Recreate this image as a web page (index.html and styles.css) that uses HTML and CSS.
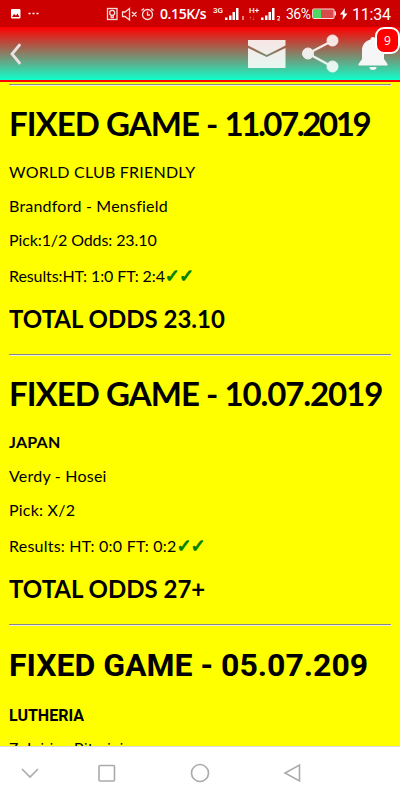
FILE: index.html
```html
<!DOCTYPE html>
<html lang="en">
<head>
  <meta charset="UTF-8" />
  <meta name="viewport" content="width=device-width, initial-scale=1" />
  <title>Fixed Games</title>
  <link rel="stylesheet" href="styles.css">
</head>
<body>
  <div class="status">
    <svg class="notif" width="30" height="12" viewBox="0 0 30 12">
      <rect x="1" y="1" width="9.500" height="9.500" rx="1" fill="#fff"/>
      <path d="M2 9l2-3 2 1.500 1.500-2L9.500 9z" fill="#c00"/>
      <path d="M18.500 5.500h2M22.500 5.500h2M26.500 5.500h2" stroke="#fff" stroke-width="1.500"/>
    </svg>
    <svg class="modes" width="50" height="14" viewBox="0 0 50 14" fill="none" stroke="#f5dcdc" stroke-width="1.300">
      <rect x="1.500" y="1.500" width="9.500" height="11"/>
      <circle cx="6.200" cy="5.800" r="2.500"/>
      <path d="M5.200 8v2.500h2V8"/>
      <path d="M16.500 5v4.500h2.500l4.500 3.500V1.500L19 5zM26 5l4.500 4.500M30.500 5L26 9.500"/>
      <circle cx="41.500" cy="7.500" r="5"/>
      <path d="M41.500 4.500v3.500H44M35.500 3.500l2.500-2M47.500 3.500l-2.500-2"/>
    </svg>
    <span class="speed">0.15K/s</span>
    <span class="net">3G</span>
    <svg class="bars" width="20" height="14" viewBox="0 0 20 14" fill="#fff">
      <path d="M0 10.500h2.500V13H0zM4 8.500h2.500V13H4zM7.500 5h2.500v8H7.500zM11 1h2.500v12H11zM17.500 9h1v4h-1z"/>
    </svg>
    <span class="net net2">H+<small>↑↓</small></span>
    <svg class="bars" width="20" height="14" viewBox="0 0 20 14" fill="#fff">
      <path d="M0 10.500h2.500V13H0zM4 8.500h2.500V13H4zM7.500 5h2.500v8H7.500zM11 1h2.500v12H11z"/>
      <path d="M16 9.500h2.500v1.500l-2 2H19" fill="none" stroke="#fff" stroke-width=".9"/>
    </svg>
    <span class="percent">36%</span>
    <svg class="battery" width="37" height="14" viewBox="0 0 37 14">
      <rect x=".6" y="2" width="21.500" height="9.500" rx="1" fill="#d94a4a" stroke="#ffdede"/>
      <rect x="1" y="2.500" width="8" height="8.500" fill="#4cd964"/>
      <path d="M22.500 4.500H24v4h-1.500z" fill="#ffdede"/>
      <path d="M33 1l-5 6.500h3l-.5 5.500 5-6.500h-3z" fill="#fff"/>
    </svg>
    <span class="clock">11:34</span>
  </div>

  <div class="toolbar">
    <svg class="back" width="16" height="24" viewBox="0 0 16 24">
      <path d="M12.500 3L5 12l7.500 9" fill="none" stroke="#e8e3e1" stroke-width="2.800" stroke-linecap="round"/>
    </svg>
    <svg class="mail" width="38" height="28" viewBox="0 0 38 28" fill="#fff" fill-opacity=".87">
      <path d="M0 0h37.500v5.500L18.700 15 0 5.500z"/>
      <path d="M0 8L18.700 17 37.500 8V28H0z"/>
    </svg>
    <svg class="share" width="37" height="39" viewBox="0 0 37 39">
      <g opacity=".87" fill="#fff" stroke="#fff">
        <path d="M30 7L6 19.500 30 32.500" fill="none" stroke-width="2.400"/>
        <circle cx="30.500" cy="6.500" r="5.500"/>
        <circle cx="6" cy="19.500" r="5.500"/>
        <circle cx="30.500" cy="32.500" r="5.500"/>
      </g>
    </svg>
    <div class="bell">
      <svg width="30" height="34" viewBox="0 0 30 34" fill="#f6f6f6">
        <path d="M12.500 3.500a2.500 2.500 0 0 1 5 0C23 5 26 9 26 14.500V23l3.500 5v1.500H.5V28L4 23v-8.500C4 9 7 5 12.500 3.500zM11.500 31h7a3.500 3 0 0 1-7 0z"/>
      </svg>
      <span class="badge">9</span>
    </div>
  </div>

  <div class="content">
    <hr>
    <h1>FIXED GAME - <span class="date-narrow">11.07.2019</span></h1>
    <p>WORLD CLUB FRIENDLY</p>
    <p>Brandford - Mensfield</p>
    <p class="tight">Pick:1/2 Odds: 23.10</p>
    <p class="results tight">Results:HT: 1:0 FT: 2:4<span class="ticks">✓✓</span></p>
    <h2>TOTAL ODDS 23.10</h2>
    <hr>
    <h1>FIXED GAME - <span class="date">10.07.2019</span></h1>
    <p><b>JAPAN</b></p>
    <p>Verdy - Hosei</p>
    <p>Pick: X/2</p>
    <p class="results">Results: HT: 0:0 FT: 0:2<span class="ticks">✓✓</span></p>
    <h2>TOTAL ODDS 27+</h2>
    <hr>
    <div class="plain">
      <h1>FIXED GAME - 05.07.209</h1>
      <p><b>LUTHERIA</b></p>
      <p>Zalgiris - Riteriai</p>
    </div>
  </div>

  <div class="navbar">
    <svg width="400" height="53" viewBox="0 0 400 53" fill="none" stroke="#aaa" stroke-width="1.600">
      <path d="M22 22l8 8 8-8"/>
      <rect x="99" y="18.500" width="15.500" height="15.500" rx="1"/>
      <circle cx="200" cy="26" r="8.500"/>
      <path d="M299.500 18v16L285 26z"/>
    </svg>
  </div>
</body>
</html>
```

FILE: styles.css
```css
body {
  margin: 0;
  height: 800px;
  display: flex;
  flex-direction: column;
  overflow: hidden;
  background: #ff0;
  color: #000;
  font-family: Lato, sans-serif;
}
.status {
  height: 27px;
  flex: none;
  display: flex;
  align-items: center;
  box-sizing: border-box;
  padding-left: 10px;
  background: #c00;
  color: #fff;
  font-family: Roboto, sans-serif;
  white-space: nowrap;
}
.modes {
  margin-left: 66px;
}
.speed {
  width: 47px;
  margin-left: 4px;
  font-family: "Open Sans", sans-serif;
  font-size: 14px;
  font-weight: 600;
  letter-spacing: -0.4px;
}
.net {
  width: 11px;
  margin: -6px 0 0 6px;
  font-size: 8px;
  font-weight: 500;
  line-height: 8px;
}
.net small {
  display: block;
  font-size: 6px;
  line-height: 5px;
  opacity: 0.6;
}
.net2 {
  margin: 0 0 0 4px;
}
.bars {
  margin-left: 1px;
}
.percent {
  width: 25px;
  margin-left: 5px;
  font-size: 14px;
  letter-spacing: -0.5px;
}
.battery {
  margin-left: 1px;
}
.clock {
  margin: 2px 0 0 3px;
  font-size: 16px;
  letter-spacing: -0.2px;
}
.toolbar {
  height: 55px;
  flex: none;
  display: flex;
  align-items: center;
  box-sizing: border-box;
  border-bottom: 2px solid #f00;
  padding-left: 7px;
  background: linear-gradient(#f00, #1fc);
}
.mail {
  margin-left: 225px;
}
.share {
  margin-left: 16px;
}
.bell {
  position: relative;
  height: 34px;
  margin: 0 0 1px 19px;
}
.badge {
  position: absolute;
  left: 17px;
  top: -9px;
  width: 21px;
  height: 23px;
  border: 2px solid #fff;
  border-radius: 9px;
  background: #f00;
  color: #fff;
  font: 12px/23px "Open Sans", sans-serif;
  text-align: center;
}
.content {
  flex: 1;
  min-height: 0;
  overflow: hidden;
  padding: 2px 9px 0;
}
hr {
  height: 0;
  margin: 0;
  border: 0;
  border-top: 1px solid #888;
  border-bottom: 1px solid #eed;
}
h1 {
  margin: 18px 0 21px;
  font-size: 33px;
  line-height: 38px;
  letter-spacing: -0.95px;
  white-space: nowrap;
}
.date {
  letter-spacing: -1.1px;
}
.date-narrow {
  letter-spacing: -2.4px;
}
h2 {
  margin: 18px 0 21px;
  font-size: 24px;
  line-height: 28px;
}
p {
  margin: 16px 0;
  font-size: 16px;
  line-height: 18px;
  letter-spacing: 0.22px;
}
.tight {
  letter-spacing: -0.1px;
}
.results {
  line-height: 22px;
}
.ticks {
  color: #008000;
  font-family: "DejaVu Sans", sans-serif;
  font-size: 18px;
  letter-spacing: -1px;
  -webkit-text-stroke: 1px #008000;
}
.plain {
  font-family: Roboto, sans-serif;
}
.plain h1 {
  margin: 20px 0 23px;
  font-size: 32px;
  letter-spacing: 0;
}
.plain p {
  letter-spacing: 0;
}
.navbar {
  height: 54px;
  flex: none;
  box-sizing: border-box;
  border-top: 1px solid #ddd;
  background: #fff;
}
```
